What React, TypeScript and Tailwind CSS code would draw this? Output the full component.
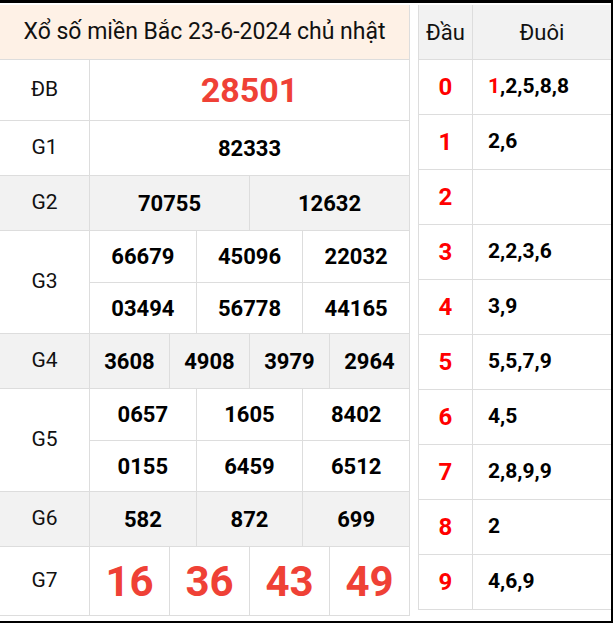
const B = "border-[#dddddd]";

function Row({ label, gray, h, lines, big }: { label: string; gray?: boolean; h: number; lines: string[][]; big?: boolean }) {
  return (
    <div className={`flex border-b ${B} ${gray ? "bg-[#f2f2f2]" : "bg-white"}`}>
      <div className={`w-[90px] shrink-0 border-r ${B} flex items-center justify-center text-[21px] text-[#111]`}>{label}</div>
      <div className="flex-1 flex flex-col">
        {lines.map((nums, i) => (
          <div key={i} className={`flex ${i > 0 ? `border-t ${B}` : ""}`} style={{ height: h }}>
            {nums.map((n, j) => (
              <div
                key={j}
                className={`flex-1 flex items-center justify-center ${j > 0 ? `border-l ${B}` : ""} ${
                  big ? "text-[42px] font-bold text-[#ef4136]" : "text-[22px] font-bold text-black"
                }`}
              >
                {n}
              </div>
            ))}
          </div>
        ))}
      </div>
    </div>
  );
}

const tails: [string, string][] = [
  ["0", "1,2,5,8,8"],
  ["1", "2,6"],
  ["2", ""],
  ["3", "2,2,3,6"],
  ["4", "3,9"],
  ["5", "5,5,7,9"],
  ["6", "4,5"],
  ["7", "2,8,9,9"],
  ["8", "2"],
  ["9", "4,6,9"],
];

export default function App() {
  return (
    <div className="w-[613px] h-[623px] bg-white border-t-[3px] border-r-[2px] border-b-[2px] border-black flex gap-[8px] pt-[2px] overflow-hidden" style={{ fontFamily: "Roboto, 'Noto Sans', sans-serif" }}>
      <div className={`w-[410px] shrink-0 border-r ${B} self-start`}>
        <div className={`h-[55px] bg-[#fef1e6] border-b ${B} flex items-center justify-center text-[23px] text-[#111]`}>
          Xổ số miền Bắc 23-6-2024 chủ nhật
        </div>
        <div className={`flex h-[61px] border-b ${B}`}>
          <div className={`w-[90px] border-r ${B} flex items-center justify-center text-[21px] text-[#111]`}>ĐB</div>
          <div className="flex-1 flex items-center justify-center text-[34px] font-bold text-[#ef4136]">28501</div>
        </div>
        <Row label="G1" h={54} lines={[["82333"]]} />
        <Row label="G2" gray h={54} lines={[["70755", "12632"]]} />
        <Row label="G3" h={51} lines={[["66679", "45096", "22032"], ["03494", "56778", "44165"]]} />
        <Row label="G4" gray h={54} lines={[["3608", "4908", "3979", "2964"]]} />
        <Row label="G5" h={51} lines={[["0657", "1605", "8402"], ["0155", "6459", "6512"]]} />
        <Row label="G6" gray h={54} lines={[["582", "872", "699"]]} />
        <Row label="G7" h={68} lines={[["16", "36", "43", "49"]]} big />
      </div>
      <div className={`flex-1 self-start border-l ${B}`}>
        <div className={`flex h-[55px] bg-[#f2f2f2] border-b ${B} text-[22px] text-[#111]`}>
          <div className={`w-[54px] border-r ${B} flex items-center justify-center`}>Đầu</div>
          <div className="flex-1 flex items-center justify-center">Đuôi</div>
        </div>
        {tails.map(([h, t]) => (
          <div key={h} className={`flex h-[55px] border-b ${B}`}>
            <div className={`w-[54px] border-r ${B} flex items-center justify-center text-[24px] font-bold text-[#ff0000]`}>{h}</div>
            <div className="flex-1 flex items-center pl-[15px] text-[21px] font-bold text-black">
              {h === "0" ? (
                <>
                  <span className="text-[#ff0000]">1</span>
                  {t.slice(1)}
                </>
              ) : (
                t
              )}
            </div>
          </div>
        ))}
      </div>
    </div>
  );
}
